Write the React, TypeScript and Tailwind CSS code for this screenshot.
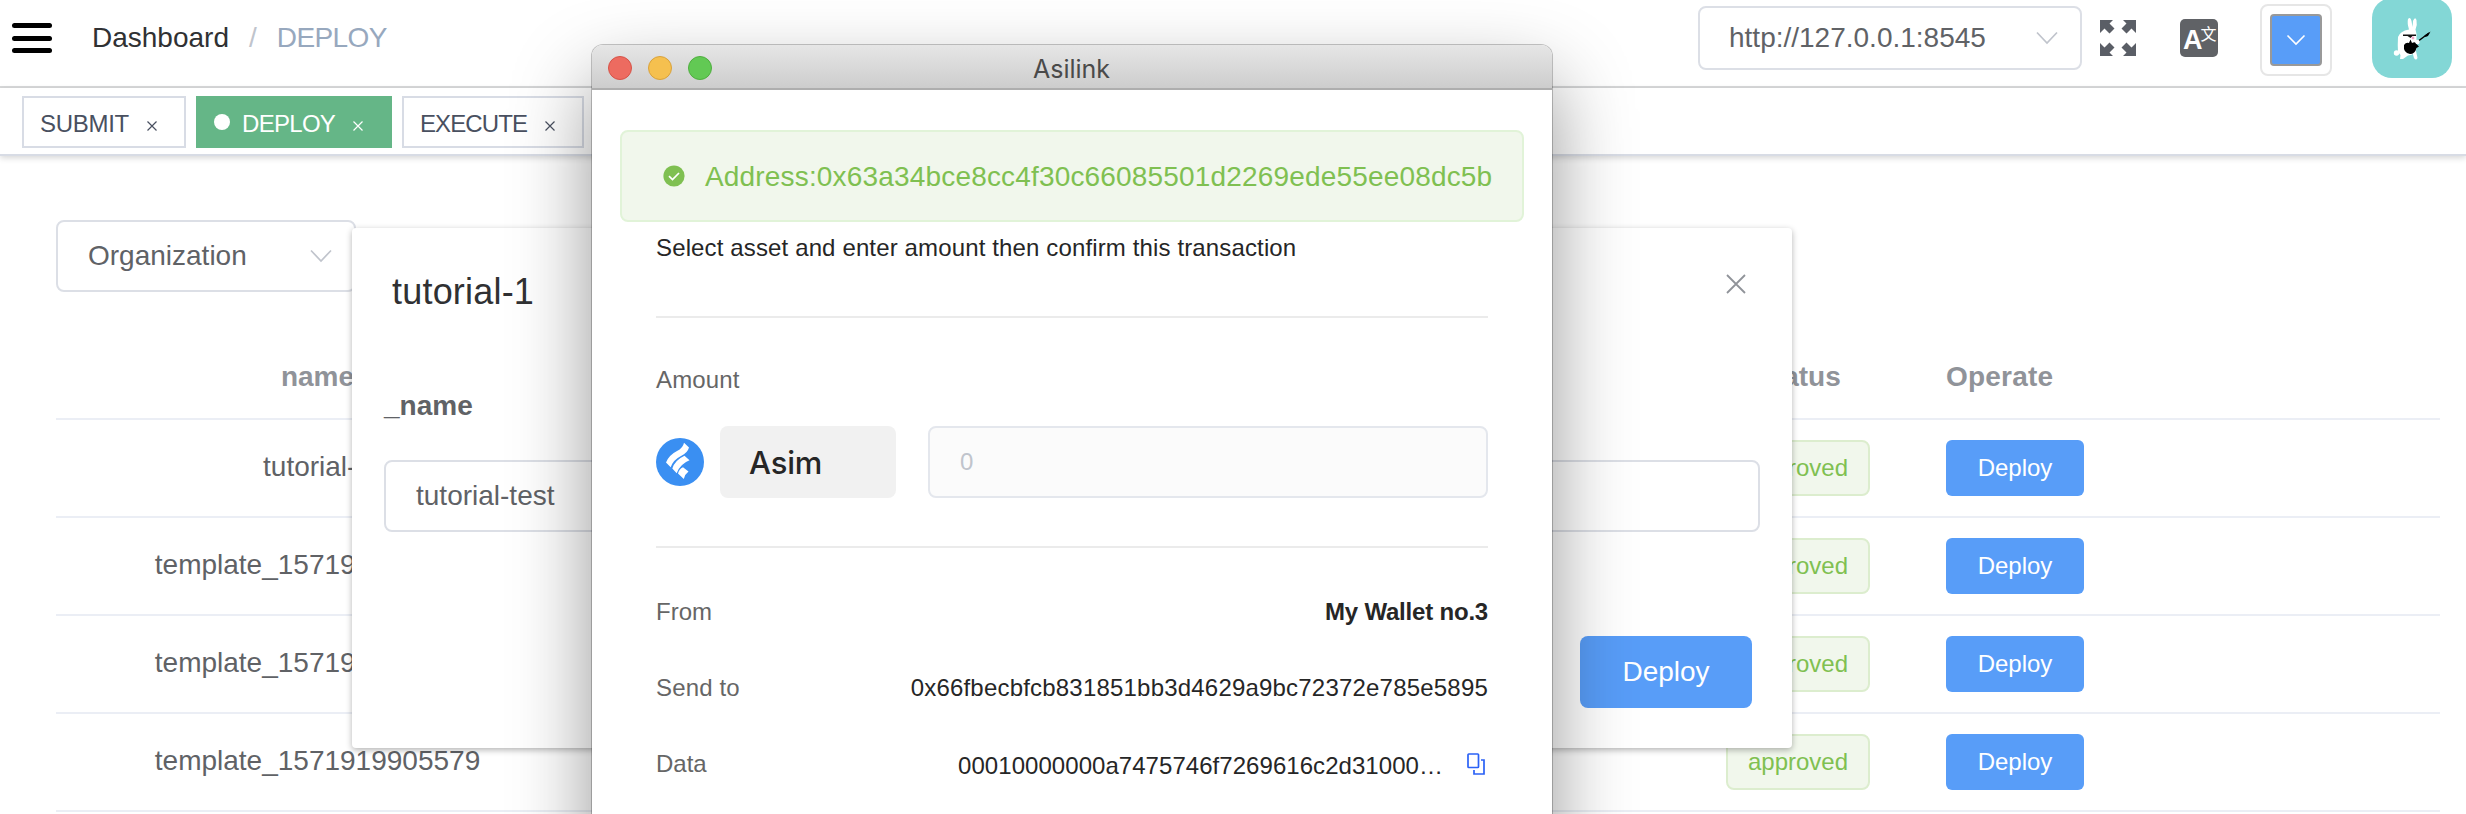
import React from "react";

const rows = ["tutorial-1", "template_1571919905560", "template_1571919905571", "template_1571919905579"];

function Chevron({ className }: { className: string }) {
  return (
    <svg className={className} width="24" height="14" viewBox="0 0 24 14" fill="none" stroke="currentColor" strokeWidth="1.7">
      <path d="M2 1.5 12 12 22 1.5" />
    </svg>
  );
}

function Cross({ size, width }: { size: number; width: number }) {
  return (
    <svg width={size} height={size} viewBox="0 0 20 20" fill="none" stroke="currentColor" strokeWidth={width}>
      <path d="M1 1 19 19M19 1 1 19" />
    </svg>
  );
}

function Tab({ label, active, className }: { label: string; active?: boolean; className: string }) {
  return (
    <div
      className={`flex h-[52px] items-center border-2 pl-4 text-[24px] ${className} ${
        active ? "border-[#65b687] bg-[#65b687] text-white" : "border-[#d8dce5] bg-white text-[#495060]"
      }`}
    >
      {active && <span className="mr-3 size-4 shrink-0 rounded-full bg-white" />}
      <span className="pt-[3px]">{label}</span>
      <span className="ml-[18px] pt-[7px]">
        <Cross size={10} width={2.4} />
      </span>
    </div>
  );
}

function Header() {
  return (
    <header className="flex h-[88px] items-start border-b-2 border-[#d8d9da] pl-3">
      <div className="flex w-10 flex-col gap-[7.5px] pt-[23px]">
        <span className="h-[5px] rounded-full bg-black" />
        <span className="h-[5px] rounded-full bg-black" />
        <span className="h-[5px] rounded-full bg-black" />
      </div>
      <div className="flex pl-10 pt-[17px] text-[28px] leading-[42px] text-[#303133]">
        <span>Dashboard</span>
        <span className="mx-5 text-[#c0c4cc]">/</span>
        <span className="tracking-[-0.6px] text-[#97a8be]">DEPLOY</span>
      </div>
      <div className="ml-auto flex items-start pr-[14px]">
        <div className="mt-[6px] flex h-16 w-96 items-center justify-between rounded-lg border-2 border-[#dcdfe6] pl-[29px] pr-[21px] text-[28px] text-[#606266]">
          http://127.0.0.1:8545
          <Chevron className="text-[#c0c4cc]" />
        </div>
        <svg className="ml-[18px] mt-5" width="36" height="36" viewBox="0 0 36 36" fill="#5a5e66">
          <path d="M0 0H13L9.500 3.500 14.500 8.500 9.500 13.500 4.500 8.500 0 13Z" />
          <path d="M36 0H23L26.500 3.500 21.500 8.500 26.500 13.500 31.500 8.500 36 13Z" />
          <path d="M0 36H13L9.500 32.500 14.500 27.500 9.500 22.500 4.500 27.500 0 23Z" />
          <path d="M36 36H23L26.500 32.500 21.500 27.500 26.500 22.500 31.500 27.500 36 23Z" />
        </svg>
        <div className="ml-11 mt-[19px] flex h-[38px] w-[38px] rounded-[5px] bg-[#606266] pl-[3px] text-white">
          <span className="pt-[6px] text-[27px] font-bold leading-[30px]">A</span>
          <span className="-ml-[2px] pt-[6px] font-['Noto_Sans_CJK_SC',sans-serif] text-[16px] leading-[16px]">文</span>
        </div>
        <div className="ml-[42px] mt-1 flex size-[72px] items-center justify-center rounded-lg border-2 border-[#e6e6e6]">
          <div className="flex size-[52px] items-center justify-center rounded-[4px] border-2 border-[#999] bg-[#589df8] text-white">
            <svg width="20" height="12" viewBox="0 0 20 12" fill="none" stroke="currentColor" strokeWidth="1.6">
              <path d="M1.500 1.500 10 10 18.500 1.500" />
            </svg>
          </div>
        </div>
        <div className="-mt-[2px] ml-10 size-20 overflow-hidden rounded-[20px] bg-[#83d7d6]">
          <svg width="80" height="80" viewBox="0 0 80 80">
            <g fill="#fff">
              <path d="M36 21Q38.500 18.500 39.500 23L40.500 29L41 23Q43 18 44.500 22Q45.500 27 43.500 31.500L44.500 36V50Q44 57 36 57.500L31 61H28L28.500 57L26 54Q25.500 47 26 39Q28 33 37 31.500Q35 25 36 21Z" />
              <circle cx="24.500" cy="55" r="2.700" />
              <path d="M40 53H44L45.500 60Q44 63 42 60Z" />
            </g>
            <path d="M31 36.500H44V38H40.500L38.500 40 35.500 38H31Z" fill="#111" />
            <path d="M32 47Q34 44 37 45L38.500 41.500 40 45Q43.500 43 44.500 46L47 48.500 44.500 50Q43 56 38 56Q31 55 32 47Z" fill="#000" />
            <path d="M45 44 57 35" stroke="#000" strokeWidth="1.500" />
            <path d="M52.500 37.500 58.500 33.500 56 38 53.500 39Z" fill="#000" />
            <circle cx="45.500" cy="44" r="2.200" fill="#fff" />
            <circle cx="41" cy="40" r="1.400" fill="#f5a3c7" />
          </svg>
        </div>
      </div>
    </header>
  );
}

function Table() {
  return (
    <div className="ml-14 mt-[42px] w-[2384px] text-[28px] text-[#606266]">
      <div className="flex h-[86px] items-center border-b-2 border-[#ebeef5] pt-[2px] font-bold text-[#909399]">
        <div className="w-[523px] text-center">name</div>
        <div className="ml-[1073px] w-[292px] text-center">Status</div>
        <div className="pl-[2px] tracking-[0.2px]">Operate</div>
      </div>
      {rows.map((name) => (
        <div key={name} className="flex h-[98px] items-center border-b-2 border-[#ebeef5]">
          <div className="w-[523px] pb-[2px] text-center">{name}</div>
          <div className="ml-[1073px] flex w-[292px] justify-center">
            <span className="flex h-14 w-36 items-center justify-center rounded-lg border-2 border-[#dcedce] bg-[#f1f7ec] text-[24px] text-[#7fc051]">
              approved
            </span>
          </div>
          <div className="ml-[2px] flex h-14 w-[138px] items-center justify-center rounded-md bg-[#589df8] text-[24px] text-white">
            Deploy
          </div>
        </div>
      ))}
    </div>
  );
}

function DeployDialog() {
  return (
    <section className="absolute left-[352px] top-[228px] flex h-[520px] w-[1440px] flex-col rounded-[4px] bg-white px-8 shadow-[0_2px_6px_rgba(0,0,0,0.3)]">
      <div className="flex justify-between pl-2 pr-[14px]">
        <h2 className="mt-10 h-[47px] text-[36px] leading-[48px] tracking-[0.2px] text-[#303133]">tutorial-1</h2>
        <span className="mt-[46px] text-[#909399]">
          <Cross size={20} width={1.8} />
        </span>
      </div>
      <label className="mt-[71px] text-[28px] font-bold leading-[40px] text-[#606266]">_name</label>
      <div className="mt-[34px] flex h-[72px] items-center rounded-lg border-2 border-[#dcdfe6] pl-[30px] text-[28px] text-[#606266]">
        tutorial-test
      </div>
      <div className="mr-2 mt-[104px] flex h-[72px] w-[172px] items-center justify-center self-end rounded-lg bg-[#589df8] text-[28px] text-white">
        Deploy
      </div>
    </section>
  );
}

function AsilinkWindow() {
  return (
    <section className="absolute left-[592px] top-[45px] h-[900px] w-[960px] rounded-t-[11px] bg-white text-[24px] shadow-[0_0_0_1px_rgba(0,0,0,0.22),0_36px_80px_rgba(0,0,0,0.42)]">
      <div className="flex h-[45px] items-center rounded-t-[11px] border-b-2 border-[#aeaeae] bg-linear-to-b from-[#e6e6e6] to-[#cdcdcd] pl-4 pt-[3px]">
        <div className="flex w-[84px] gap-4">
          <span className="size-6 shrink-0 rounded-full border border-[#d65348] bg-[#ed6b60]" />
          <span className="size-6 shrink-0 rounded-full border border-[#d9a23c] bg-[#f5c04f]" />
          <span className="size-6 shrink-0 rounded-full border border-[#4fae3f] bg-[#62c954]" />
        </div>
        <div className="flex-1 pr-[101px] pt-[2px] text-center font-['Inter',sans-serif] text-[25px] leading-[30px] text-[#4a4a4a]">Asilink</div>
      </div>
      <div className="ml-7 mt-10 flex h-[92px] w-[904px] items-center rounded-lg border-2 border-[#e1f3d8] bg-[#f1f7ec] pl-[41px] text-[28px] text-[#7fc051]">
        <svg width="22" height="22" viewBox="0 0 22 22">
          <circle cx="11" cy="11" r="10.600" fill="#7fc051" />
          <path d="M6 11.200 9.500 14.600 16 8" fill="none" stroke="#fff" strokeWidth="1.700" />
        </svg>
        <span className="ml-5 whitespace-nowrap pt-px tracking-[0.17px]">Address:0x63a34bce8cc4f30c66085501d2269ede55ee08dc5b</span>
      </div>
      <div className="mx-16">
        <p className="mt-3 text-[24px] leading-[28px] tracking-[0.135px] text-[#262626]">Select asset and enter amount then confirm this transaction</p>
        <div className="mt-[54px] border-t-2 border-[#ebebeb]" />
        <p className="mt-[48px] leading-[28px] tracking-[0.15px] text-[#666]">Amount</p>
        <div className="mt-8 flex items-center">
          <svg width="48" height="48" viewBox="0 0 48 48">
            <circle cx="24" cy="24" r="24" fill="#3a8ff2" />
            <g fill="#fff">
              <path d="M28 4.700 33 9.500Q31.500 15 25 18Q17 22 14.700 29.300L10 24.500Q13 17 21 13Q27 10 28 4.700Z" />
              <path d="M28.500 17.700 33.500 22.300Q24 26 20.700 35.300L16.300 30.500Q19 22 28.500 17.700Z" />
              <path d="M27 29.300 32.500 33.500Q29 36 27.800 41L22 35.500Q23 31 27 29.300Z" />
            </g>
          </svg>
          <div className="ml-4 flex h-[72px] w-44 items-center rounded-lg bg-[#f1f1f1] pl-[29px] pt-[2px] font-['Inter',sans-serif] text-[31px] font-medium tracking-[-0.2px] text-[#262626]">
            Asim
          </div>
          <div className="ml-8 flex h-[72px] flex-1 items-center rounded-lg border-2 border-[#e4e7ed] bg-[#fbfbfb] pl-[30px] text-[#c0c4cc]">0</div>
        </div>
        <div className="mt-12 border-t-2 border-[#ebebeb]" />
        <div className="mt-[50px] flex justify-between leading-[28px]">
          <span className="text-[#666]">From</span>
          <span className="font-bold tracking-[-0.2px] text-[#262626]">My Wallet no.3</span>
        </div>
        <div className="mt-12 flex justify-between leading-[28px]">
          <span className="tracking-[0.15px] text-[#666]">Send to</span>
          <span className="tracking-[0.2px] text-[#262626]">0x66fbecbfcb831851bb3d4629a9bc72372e785e5895</span>
        </div>
        <div className="mt-12 flex leading-[28px]">
          <span className="text-[#666]">Data</span>
          <span className="ml-auto pt-[2px] tracking-[0.05px] text-[#262626]">00010000000a7475746f7269616c2d31000…</span>
          <svg className="ml-[24px] mr-[3px] mt-[3px]" width="18" height="22" viewBox="0 0 18 22" fill="none" stroke="#2b62f6" strokeWidth="1.700">
            <rect x="1" y="1" width="10.500" height="13.500" rx="0.800" />
            <path d="M14 7H17V21H7V17" />
          </svg>
        </div>
      </div>
    </section>
  );
}

export default function App() {
  return (
    <main className="relative h-[814px] w-[2466px] overflow-hidden bg-white font-['Liberation_Sans',Arial,sans-serif]">
      <Header />
      <nav className="flex h-[68px] items-start gap-[10px] border-b-2 border-[#d8dce5] pl-[22px] pt-2 shadow-[0_2px_6px_rgba(0,0,0,0.16)]">
        <Tab label="SUBMIT" className="w-[164px] tracking-[-0.3px]" />
        <Tab label="DEPLOY" active className="w-[196px] tracking-[-0.7px]" />
        <Tab label="EXECUTE" className="w-[182px] tracking-[-0.9px]" />
      </nav>
      <div className="ml-14 mt-16 flex h-[72px] w-[300px] items-center justify-between rounded-lg border-2 border-[#dcdfe6] pl-[30px] pr-[21px] text-[28px] text-[#606266]">
        Organization
        <Chevron className="text-[#c0c4cc]" />
      </div>
      <Table />
      <DeployDialog />
      <AsilinkWindow />
    </main>
  );
}
